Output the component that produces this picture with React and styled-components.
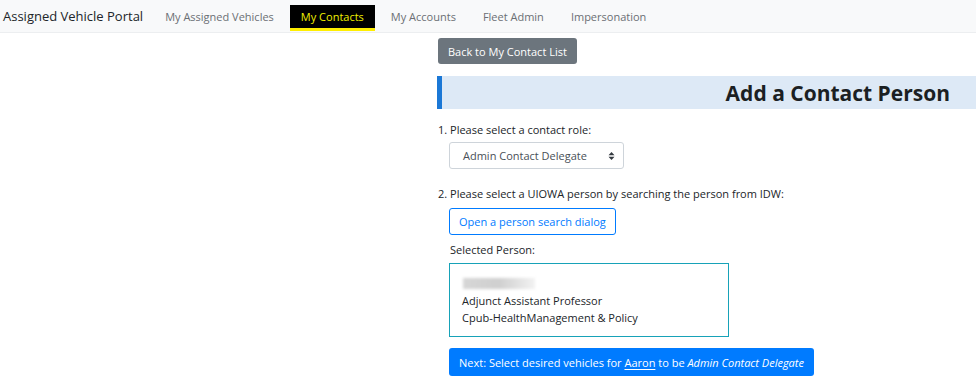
import React from "react";
import styled, { createGlobalStyle } from "styled-components";

const GlobalStyle = createGlobalStyle`
  body {
    margin: 0;
    background: #ffffff;
    font-family: "Open Sans", "Noto Sans", sans-serif;
    font-size: 11px;
    color: #212529;
  }
`;

const NavBar = styled.nav`
  display: flex;
  align-items: center;
  height: 32px;
  background: #f8f9fa;
  border-bottom: 1px solid #eceef0;
`;

const Brand = styled.div`
  font-size: 13px;
  color: #212529;
  padding-left: 3px;
  margin-right: 11px;
`;

const NavLink = styled.a`
  display: flex;
  align-items: center;
  height: 23px;
  padding: 0 11px;
  margin-right: 5px;
  margin-top: 3px;
  font-size: 11px;
  text-decoration: none;
  border-bottom: 3px solid ${(p) => (p.active ? "#ffee00" : "transparent")};
  background: ${(p) => (p.active ? "#000000" : "transparent")};
  color: ${(p) => (p.active ? "#f0f000" : "#6b6f74")};
`;

const Page = styled.div`
  display: grid;
  grid-template-columns: 437px 1fr;
`;

const Column = styled.div`
  display: flex;
  flex-direction: column;
  align-items: flex-start;
  padding-top: 5px;
`;

const BackButton = styled.button`
  height: 26px;
  padding: 0 10px;
  background: #6c757d;
  color: #ffffff;
  border: none;
  border-radius: 3px;
  font-family: inherit;
  font-size: 11px;
  margin-left: 1px;
`;

const HeaderBar = styled.div`
  align-self: stretch;
  display: flex;
  justify-content: flex-end;
  align-items: center;
  height: 33px;
  margin-top: 12px;
  background: #dde9f6;
  border-left: 5px solid #1b78d6;
  padding-right: 26px;
`;

const Heading = styled.h1`
  margin: 0;
  font-size: 21px;
  font-weight: 700;
  color: #1b1f23;
`;

const Label = styled.div`
  margin-top: ${(p) => p.top || 0}px;
  margin-left: 1px;
  line-height: 17px;
  font-size: 11px;
`;

const Indented = styled.div`
  margin-left: 12px;
  margin-top: ${(p) => p.top || 0}px;
`;

const Select = styled.div`
  display: flex;
  align-items: center;
  justify-content: space-between;
  box-sizing: border-box;
  width: 175px;
  height: 27px;
  padding: 0 8px 0 13px;
  border: 1px solid #ced4da;
  border-radius: 3px;
  font-size: 11px;
  color: #495057;
`;

const OutlineButton = styled.button`
  height: 27px;
  padding: 0 9px;
  background: #ffffff;
  color: #007bff;
  border: 1px solid #007bff;
  border-radius: 3px;
  font-family: inherit;
  font-size: 11px;
`;

const PersonBox = styled.div`
  box-sizing: border-box;
  width: 280px;
  height: 74px;
  margin-top: 5px;
  padding: 11px 12px 0;
  border: 1px solid #17a2b8;
  font-size: 11px;
  line-height: 17px;
`;

const Blurred = styled.div`
  width: 72px;
  height: 11px;
  margin: 3px 0 3px 1px;
  background: linear-gradient(90deg, #d6d6d6 0%, #cfcfcf 50%, #f2f2f2 100%);
  filter: blur(1.5px);
`;

const NextButton = styled.button`
  height: 28px;
  margin-top: 11px;
  padding: 0 10px;
  background: #007bff;
  color: #ffffff;
  border: none;
  border-radius: 3px;
  font-family: inherit;
  font-size: 11px;

  u {
    text-underline-offset: 2px;
  }
`;

const Arrows = () => (
  <svg width="7" height="10" viewBox="0 0 7 10">
    <path d="M3.5 1 L6.5 4.2 L0.5 4.2 Z" fill="#343a40" />
    <path d="M3.5 9 L6.5 5.8 L0.5 5.8 Z" fill="#343a40" />
  </svg>
);

export default function App() {
  return (
    <>
      <GlobalStyle />
      <NavBar>
        <Brand>Assigned Vehicle Portal</Brand>
        <NavLink>My Assigned Vehicles</NavLink>
        <NavLink active>My Contacts</NavLink>
        <NavLink>My Accounts</NavLink>
        <NavLink>Fleet Admin</NavLink>
        <NavLink>Impersonation</NavLink>
      </NavBar>
      <Page>
        <div />
        <Column>
          <BackButton>Back to My Contact List</BackButton>
          <HeaderBar>
            <Heading>Add a Contact Person</Heading>
          </HeaderBar>
          <Label top={12}>1. Please select a contact role:</Label>
          <Indented top={4}>
            <Select>
              Admin Contact Delegate
              <Arrows />
            </Select>
          </Indented>
          <Label top={16}>2. Please select a UIOWA person by searching the person from IDW:</Label>
          <Indented top={6}>
            <OutlineButton>Open a person search dialog</OutlineButton>
          </Indented>
          <Indented top={6}>
            <Label>Selected Person:</Label>
            <PersonBox>
              <Blurred />
              <div>Adjunct Assistant Professor</div>
              <div>Cpub-HealthManagement &amp; Policy</div>
            </PersonBox>
            <NextButton>
              Next: Select desired vehicles for <u>Aaron</u> to be <i>Admin Contact Delegate</i>
            </NextButton>
          </Indented>
        </Column>
      </Page>
    </>
  );
}
